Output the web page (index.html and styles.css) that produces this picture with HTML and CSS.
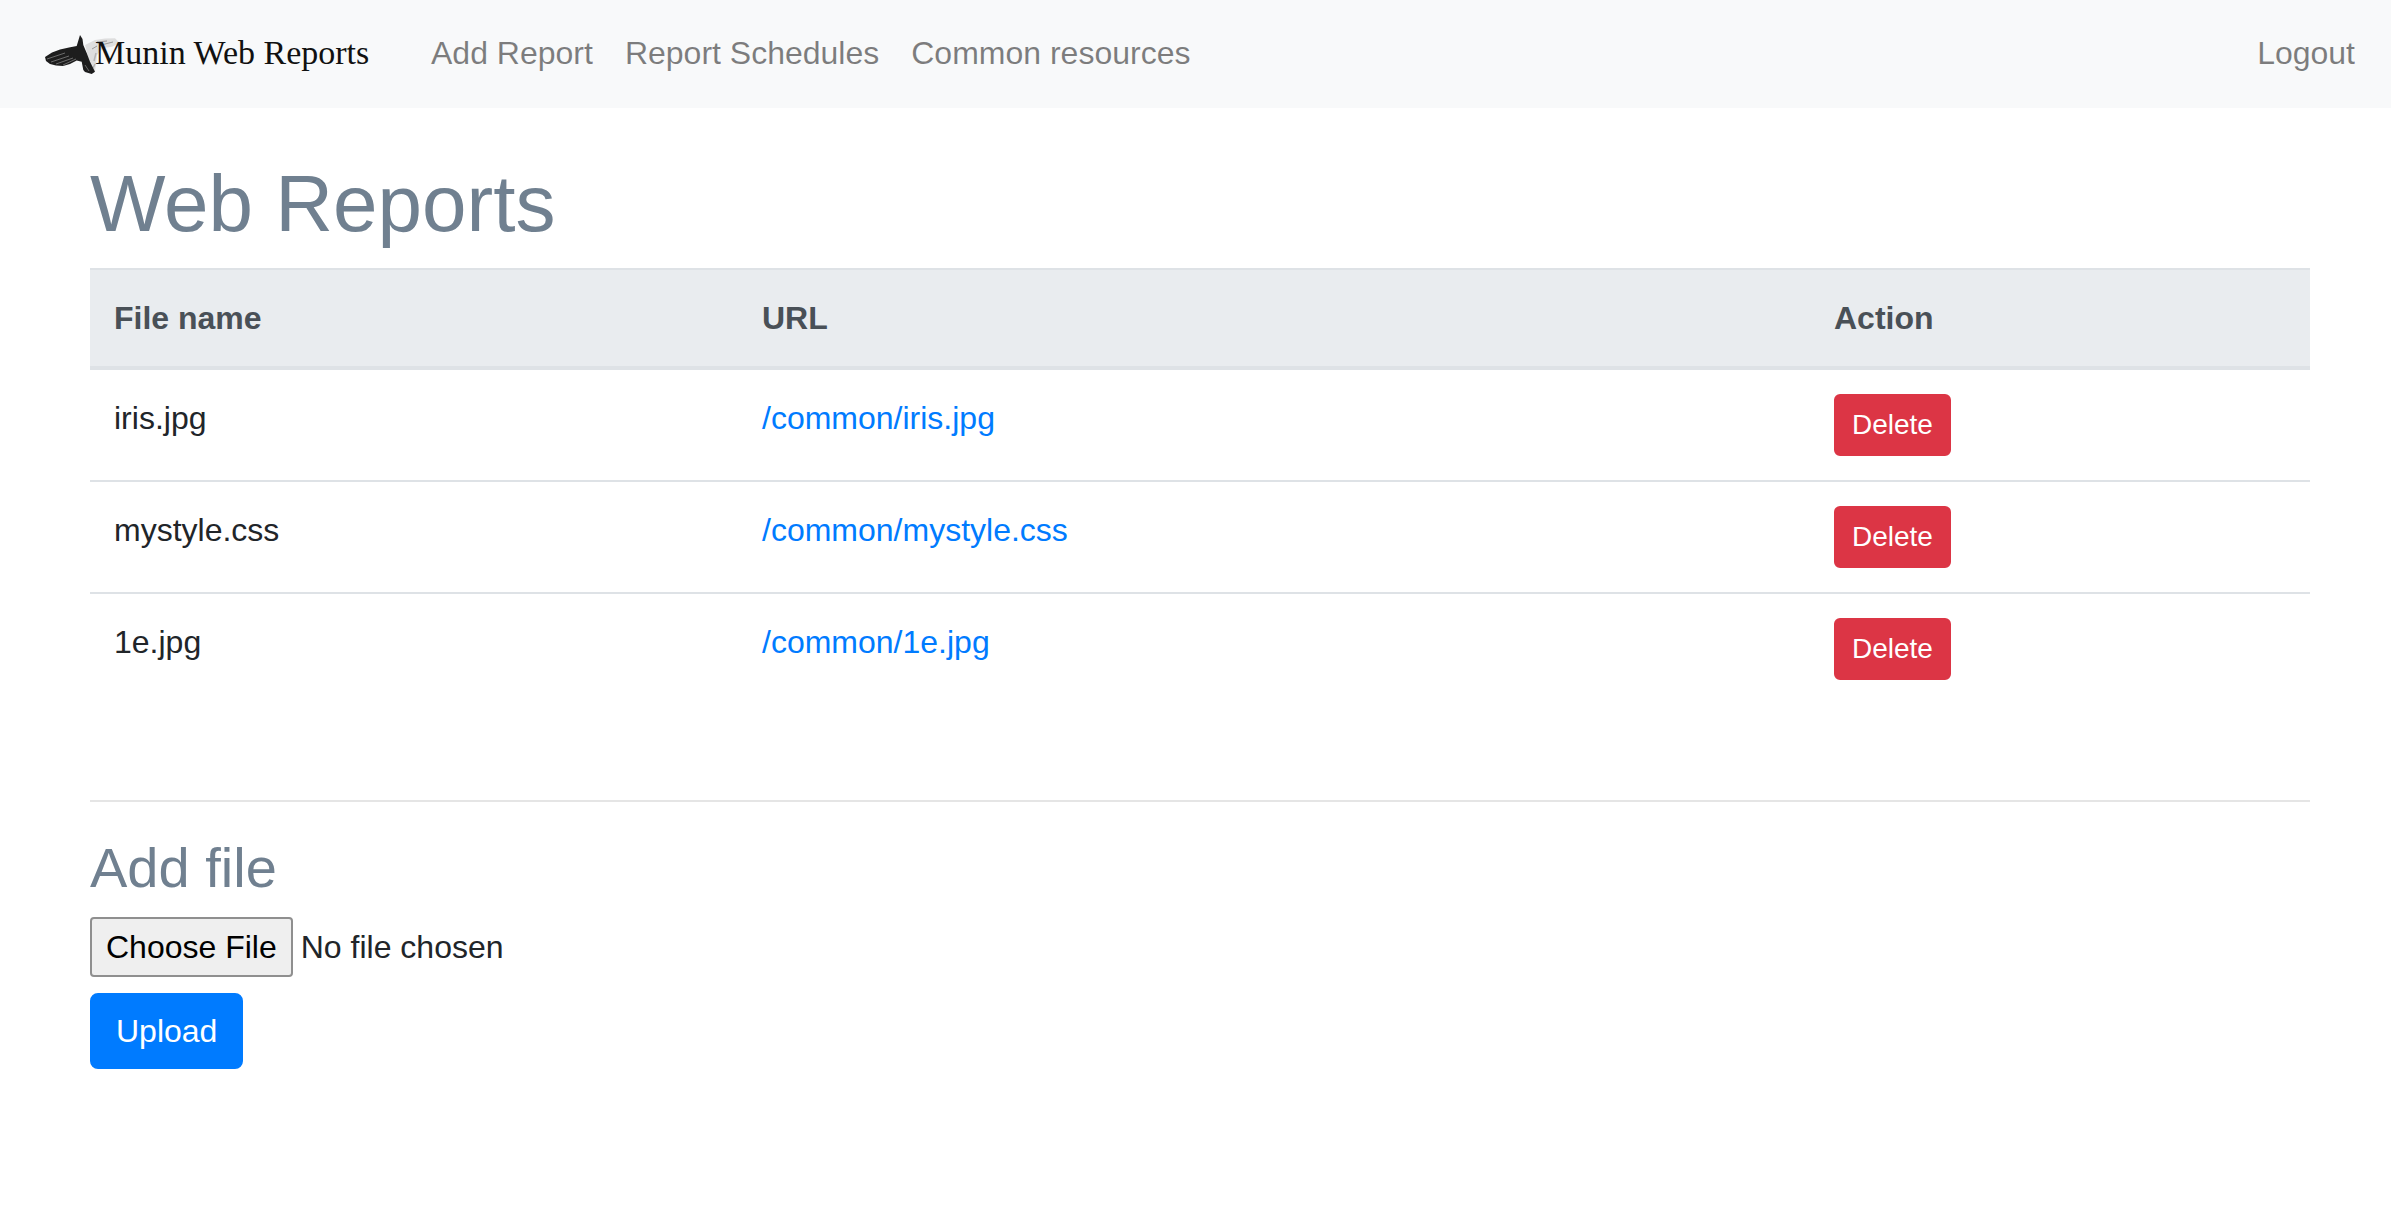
FILE: index.html
```html
<!DOCTYPE html>
<html lang="en">
<head>
    <meta charset="UTF-8">
    <meta name="viewport" content="width=device-width, initial-scale=1.0">
    <title>Web Reports</title>
    <link rel="stylesheet" href="styles.css">
</head>
<body>

    <nav class="navbar">
        <a class="brand" href="#">
            <svg class="brand-bird" width="78" height="40" viewBox="0 0 78 40">
                <!-- pale far wing -->
                <path fill="#dedede" d="M40 10 L50 5 L60 3.5 L70 3.3 L75 8.3 L67 11.7 L58 13 L52 20 L50 37 L44 26 Z"/>
                <path fill="none" stroke="#999" stroke-width="1" d="M52 7 L62 6 M56 10 L68 7 M47 14 L52 11"/>
                <path fill="none" stroke="#b5b5b5" stroke-width="1.5" d="M49 26 L51 18 M48 33 L50 29"/>
                <!-- dark body and near wing -->
                <path fill="#1d1d1d" d="M0 22 L7 17.5 L15 14.5 L24 12.5 L31.7 11 L33.5 5 L35 0 L37.5 4 L38.3 10 L41.7 18 L45 26.7 L50 36.7 L46.7 39 L40 37 L38.3 35 L36.7 26.7 L31.7 25.5 L25 29 L18 31 L11 30.5 L5 29 L1 26 Z"/>
                <!-- feather gaps -->
                <path fill="none" stroke="#8c8c8c" stroke-width=".7" d="M2 24 L20 18 M6 27 L24 21 M11 29 L28 23 M18 30 L31 24"/>
                <path fill="none" stroke="#6a6a6a" stroke-width="1" d="M40 30 L44 36"/>
            </svg>
            <span class="brand-text">Munin Web Reports</span>
        </a>
        <a class="nav-link" href="#">Add Report</a>
        <a class="nav-link" href="#">Report Schedules</a>
        <a class="nav-link" href="#">Common resources</a>
        <a class="nav-link logout" href="#">Logout</a>
    </nav>

    <div class="container">
        <h1>Web Reports</h1>
        <table>
            <thead>
                <tr>
                    <th class="col-name">File name</th>
                    <th class="col-url">URL</th>
                    <th>Action</th>
                </tr>
            </thead>
            <tbody>
                <tr>
                    <td>iris.jpg</td>
                    <td><a href="#">/common/iris.jpg</a></td>
                    <td><button class="btn-delete">Delete</button></td>
                </tr>
                <tr>
                    <td>mystyle.css</td>
                    <td><a href="#">/common/mystyle.css</a></td>
                    <td><button class="btn-delete">Delete</button></td>
                </tr>
                <tr>
                    <td>1e.jpg</td>
                    <td><a href="#">/common/1e.jpg</a></td>
                    <td><button class="btn-delete">Delete</button></td>
                </tr>
            </tbody>
        </table>

        <hr>

        <h3>Add file</h3>
        <form>
            <input type="file" class="file-input">
            <button type="button" class="btn-upload">Upload</button>
        </form>
    </div>

</body>
</html>
```

FILE: styles.css
```css
html { font-size: 32px; }
body {
    margin: 0;
    font-family: "Liberation Sans", Arial, sans-serif;
    font-size: 32px;
    line-height: 1.5;
    color: #212529;
    background: #fff;
}
a { text-decoration: none; color: #007bff; }

.navbar {
    display: flex;
    align-items: center;
    box-sizing: border-box;
    height: 108px;
    padding: 0 20px 3px 45px;
    background: #f8f9fa;
}
.brand {
    display: flex;
    align-items: center;
    width: 370px;
    color: #111;
}
.brand-bird { flex: none; margin-top: 4px; }
.brand-text {
    margin-left: -28px;
    font-family: "Liberation Serif", serif;
    font-size: 34px;
    line-height: 1;
    white-space: nowrap;
}
.nav-link {
    padding: 8px 16px;
    color: rgba(0, 0, 0, .5);
}
.logout { margin-left: auto; }

.container { padding: 48px 81px 0 90px; }
h1, h3 {
    margin: 0 0 16px;
    font-weight: 400;
    line-height: 1.2;
    color: slategray;
}
h1 { font-size: 80px; }
h3 { font-size: 56px; }

table {
    width: 100%;
    table-layout: fixed;
    border-collapse: collapse;
    margin-bottom: 96px;
}
th, td {
    padding: 24px;
    text-align: left;
    vertical-align: top;
    border-top: 2px solid #dee2e6;
}
thead th {
    background: #e9ecef;
    color: #495057;
    border-bottom: 4px solid #dee2e6;
}
.col-name { width: 600px; }
.col-url { width: 1024px; }

.btn-delete {
    padding: 8px 16px;
    font: inherit;
    font-size: 28px;
    line-height: 1.5;
    color: #fff;
    background: #dc3545;
    border: 2px solid #dc3545;
    border-radius: 6px;
}

hr {
    margin: 0 0 32px;
    border: 0;
    border-top: 2px solid rgba(0, 0, 0, .1);
}

.file-input {
    display: block;
    font: inherit;
    margin-bottom: 16px;
}
.file-input::file-selector-button {
    margin-right: 8px;
    padding: 9px 14px;
    font: inherit;
    line-height: 38px;
    color: #000;
    background: #efefef;
    border: 2px solid #8f8f8f;
    border-radius: 4px;
}
.btn-upload {
    display: block;
    padding: 12px 24px;
    font: inherit;
    color: #fff;
    background: #007bff;
    border: 2px solid #007bff;
    border-radius: 8px;
}
```
